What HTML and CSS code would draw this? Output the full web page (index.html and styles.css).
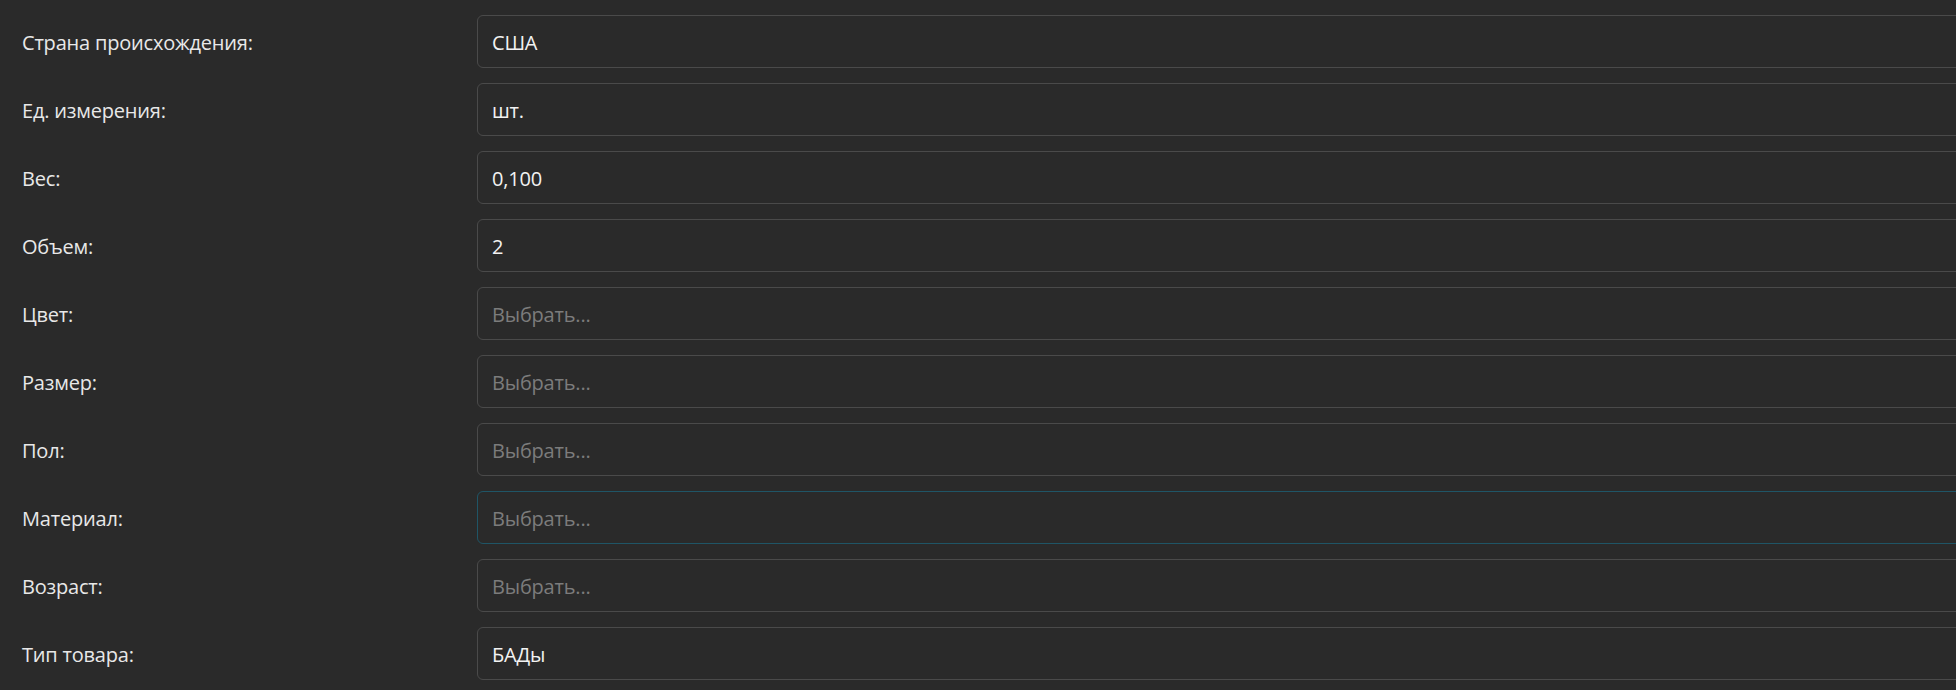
FILE: index.html
```html
<!DOCTYPE html>
<html lang="ru">
<head>
<meta charset="utf-8">
<link rel="stylesheet" href="styles.css">
</head>
<body>
<div class="form">
  <div class="row"><div class="label">Страна происхождения:</div><div class="field">США</div></div>
  <div class="row"><div class="label">Ед. измерения:</div><div class="field">шт.</div></div>
  <div class="row"><div class="label">Вес:</div><div class="field">0,100</div></div>
  <div class="row"><div class="label">Объем:</div><div class="field">2</div></div>
  <div class="row"><div class="label">Цвет:</div><div class="field placeholder">Выбрать...</div></div>
  <div class="row"><div class="label">Размер:</div><div class="field placeholder">Выбрать...</div></div>
  <div class="row"><div class="label">Пол:</div><div class="field placeholder">Выбрать...</div></div>
  <div class="row"><div class="label">Материал:</div><div class="field placeholder focused">Выбрать...</div></div>
  <div class="row"><div class="label">Возраст:</div><div class="field placeholder">Выбрать...</div></div>
  <div class="row"><div class="label">Тип товара:</div><div class="field">БАДы</div></div>
</div>
</body>
</html>
```
FILE: styles.css
```css
html, body {
  margin: 0;
  padding: 0;
  background: #2a2a2a;
  overflow: hidden;
  height: 690px;
}
body {
  font-family: "Open Sans", "Noto Sans", sans-serif;
  font-size: 20px;
  letter-spacing: -0.2px;
  color: #e6e6e6;
}
.form {
  display: flex;
  flex-direction: column;
  gap: 15px;
  padding: 15px 0 0 22px;
  width: calc(100% + 40px);
  box-sizing: border-box;
}
.row {
  display: grid;
  grid-template-columns: 455px 1fr;
  align-items: center;
}
.label {
  color: #e8e8e8;
  padding-top: 2px;
}
.field {
  height: 53px;
  box-sizing: border-box;
  border: 1px solid #4a4a4a;
  border-radius: 6px;
  padding: 2px 14px 0;
  display: flex;
  align-items: center;
  color: #f2f2f2;
}
.field.placeholder {
  color: #7c7c7c;
}
.field.focused {
  border-color: #1f5566;
}
```
